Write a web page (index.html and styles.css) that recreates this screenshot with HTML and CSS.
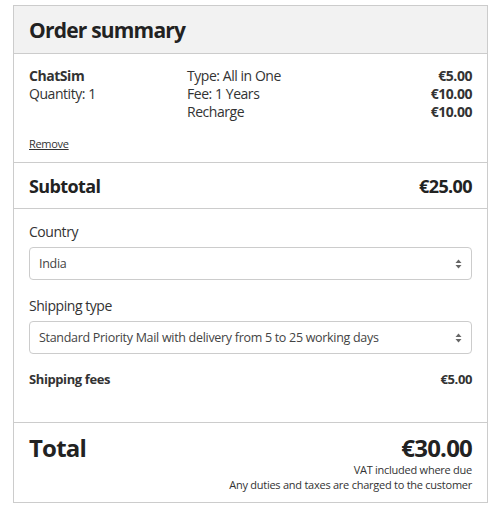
FILE: index.html
```html
<!DOCTYPE html>
<html>
<head>
<meta charset="utf-8">
<link rel="stylesheet" href="styles.css">
</head>
<body>
<div class="card">
  <div class="header"><h1 class="title">Order summary</h1></div>
  <div class="items">
    <div class="item">
      <div class="item-name">
        <div class="bold">ChatSim</div>
        <div>Quantity: 1</div>
      </div>
      <div class="item-desc">
        <div>Type: All in One</div>
        <div>Fee: 1 Years</div>
        <div>Recharge</div>
      </div>
      <div class="item-prices">
        <div class="bold">€5.00</div>
        <div class="bold">€10.00</div>
        <div class="bold">€10.00</div>
      </div>
    </div>
    <a class="remove" href="#">Remove</a>
  </div>
  <div class="subtotal">
    <span>Subtotal</span>
    <span>€25.00</span>
  </div>
  <div class="form">
    <label class="label">Country</label>
    <div class="select">
      <span>India</span>
      <svg class="arrows" width="7" height="12" viewBox="0 0 7 12"><path d="M3.5 1.5 L6.5 5 L0.5 5 Z" fill="#666"/><path d="M3.5 10.5 L6.5 7 L0.5 7 Z" fill="#666"/></svg>
    </div>
    <label class="label">Shipping type</label>
    <div class="select">
      <span>Standard Priority Mail with delivery from 5 to 25 working days</span>
      <svg class="arrows" width="7" height="12" viewBox="0 0 7 12"><path d="M3.5 1.5 L6.5 5 L0.5 5 Z" fill="#666"/><path d="M3.5 10.5 L6.5 7 L0.5 7 Z" fill="#666"/></svg>
    </div>
    <div class="fees">
      <span>Shipping fees</span>
      <span>€5.00</span>
    </div>
  </div>
  <div class="total">
    <div class="total-row">
      <span>Total</span>
      <span>€30.00</span>
    </div>
    <div class="note">VAT included where due</div>
    <div class="note">Any duties and taxes are charged to the customer</div>
  </div>
</div>
</body>
</html>
```
FILE: styles.css
```css
* { box-sizing: border-box; }
body {
  margin: 0;
  font-family: "Open Sans", "Noto Sans", sans-serif;
  color: #333;
  background: #fff;
}
.card {
  margin: 5px 0 0 13px;
  width: 475px;
  border: 1px solid #ccc;
}
.header {
  background: #f2f2f2;
  height: 48px;
  border-bottom: 1px solid #ccc;
  padding: 0 15px;
  display: flex;
  align-items: center;
}
.title {
  margin: 0;
  font-size: 21px;
  font-weight: 700;
  letter-spacing: -0.8px;
  color: #222;
}
.items {
  padding: 13px 15px 10px;
  border-bottom: 1px solid #ccc;
  font-size: 14px;
  line-height: 18px;
  letter-spacing: -0.45px;
}
.item {
  display: flex;
}
.item-name { width: 158px; }
.item-desc { flex: 1; }
.item-prices { text-align: right; }
.bold { font-weight: 700; }
.remove {
  display: block;
  margin-top: 15px;
  font-size: 11px;
  color: #333;
  line-height: 16px;
  letter-spacing: -0.3px;
}
.subtotal {
  height: 46px;
  border-bottom: 1px solid #ccc;
  padding: 0 15px;
  display: flex;
  justify-content: space-between;
  align-items: center;
  font-size: 18px;
  font-weight: 700;
  letter-spacing: -0.6px;
  color: #222;
}
.form {
  padding: 13px 15px 0;
  height: 214px;
  border-bottom: 1px solid #ccc;
}
.label {
  display: block;
  font-size: 14px;
  line-height: 20px;
  margin-bottom: 5px;
  letter-spacing: -0.45px;
}
.select {
  height: 33px;
  border: 1px solid #ccc;
  border-radius: 4px;
  padding: 0 9px 0 9px;
  display: flex;
  align-items: center;
  justify-content: space-between;
  font-size: 12.5px;
  letter-spacing: -0.3px;
  color: #444;
  margin-bottom: 16px;
}
.fees {
  display: flex;
  justify-content: space-between;
  font-size: 13px;
  font-weight: 700;
  letter-spacing: -0.4px;
  margin-top: 0;
}
.total {
  padding: 11px 15px 10px;
  text-align: right;
}
.total-row {
  display: flex;
  justify-content: space-between;
  font-size: 24px;
  font-weight: 700;
  line-height: 28px;
  letter-spacing: -0.8px;
  color: #222;
}
.note {
  font-size: 11px;
  line-height: 15px;
  letter-spacing: -0.25px;
}
```
